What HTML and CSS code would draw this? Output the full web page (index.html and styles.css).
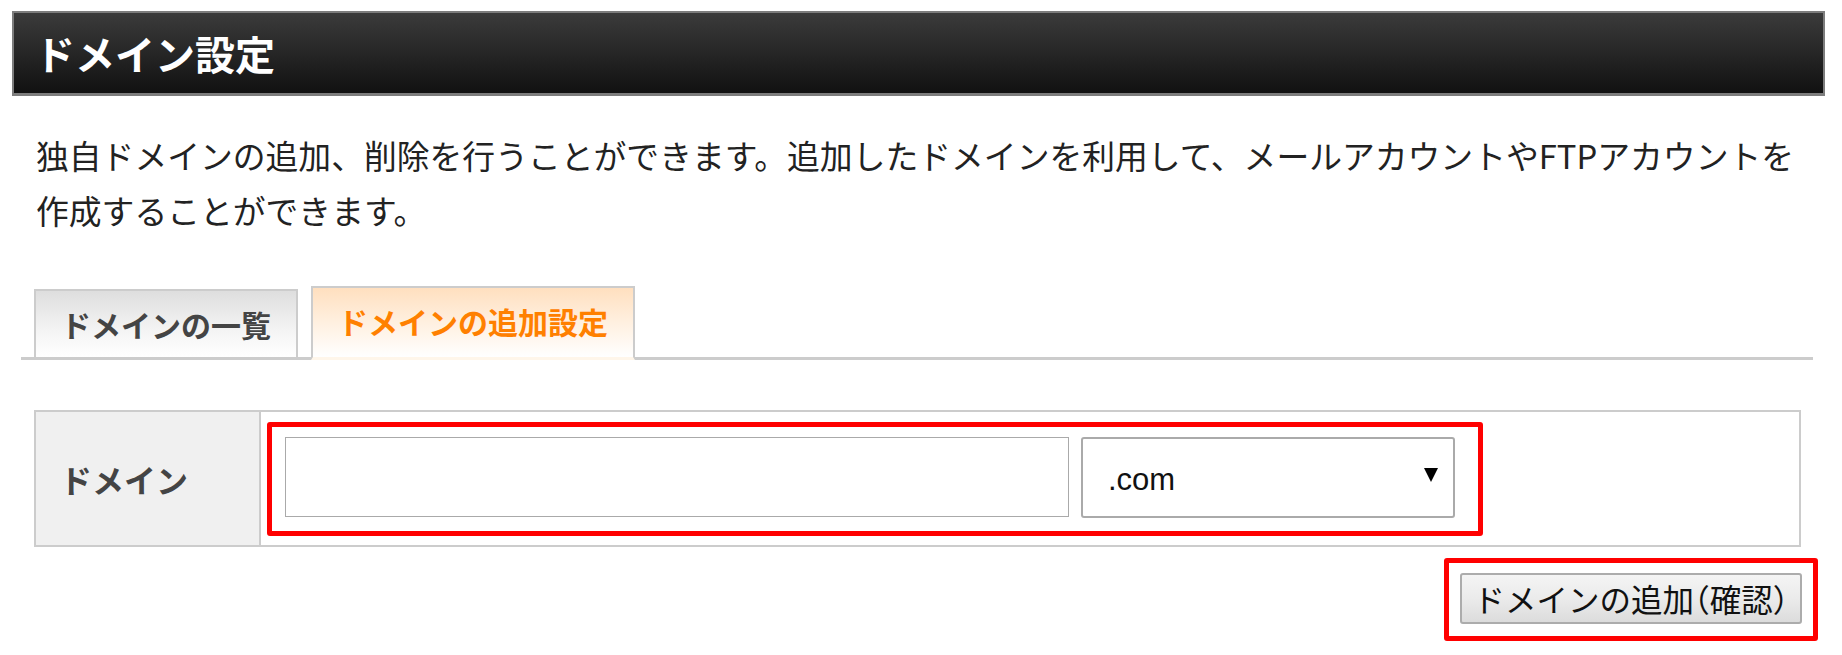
FILE: index.html
```html
<!DOCTYPE html>
<html lang="ja">
<head>
<meta charset="utf-8">
<title>ドメイン設定</title>
<link rel="stylesheet" href="styles.css">
</head>
<body>
<div class="page">
  <h1 class="page-title">ドメイン設定</h1>
  <p class="lead">独自ドメインの追加、削除を行うことができます。追加したドメインを利用して、メールアカウントやFTPアカウントを<br>作成することができます。</p>

  <div class="tabs">
    <div class="tab">ドメインの一覧</div>
    <div class="tab tab-active">ドメインの追加設定</div>
  </div>

  <div class="form-table">
    <div class="form-label">ドメイン</div>
    <div class="form-value">
      <div class="highlight highlight-fields">
        <div class="text-input"></div>
        <div class="select-box"><span class="select-text">.com</span><span class="select-arrow"></span></div>
      </div>
    </div>
  </div>

  <div class="actions">
    <div class="highlight highlight-button">
      <button class="btn" type="button">ドメインの追加<span class="paren">（</span>確認<span class="paren">）</span></button>
    </div>
  </div>
</div>
</body>
</html>
```

FILE: styles.css
```css
html, body {
  margin: 0;
  padding: 0;
  background: #ffffff;
}

body {
  font-family: "Noto Sans CJK JP", "Noto Sans", sans-serif;
  color: #222222;
}

.page {
  padding: 11px 17px 0 12px;
}

.page-title {
  margin: 0;
  height: 80px;
  line-height: 80px;
  padding-left: 21px;
  border: 2px solid #7d7d7d;
  border-bottom-width: 3px;
  background: linear-gradient(to bottom, #3b3b3b 0%, #262626 50%, #111111 100%);
  color: #ffffff;
  font-size: 40px;
  font-weight: 700;
}

.lead {
  margin: 31px 0 0 0;
  padding-left: 24px;
  font-size: 32.8px;
  line-height: 55px;
  color: #222222;
  font-weight: 400;
  white-space: nowrap;
}

.tabs {
  display: flex;
  align-items: flex-end;
  gap: 13px;
  margin: 49px 12px 0 9px;
  padding-left: 13px;
  border-bottom: 3px solid #cccccc;
  height: 71px;
}

.tab {
  box-sizing: border-box;
  height: 71px;
  margin-bottom: -3px;
  padding: 0 25px;
  border: 2px solid #cccccc;
  border-bottom: 3px solid #cccccc;
  background: linear-gradient(to bottom, #dedede 0%, #f4f4f4 60%, #ffffff 100%);
  color: #444444;
  font-size: 30px;
  font-weight: 700;
  line-height: 66px;
}

.tab-active {
  height: 74px;
  border-bottom: 3px solid #fff6ea;
  background: linear-gradient(to bottom, #ffdfbf 0%, #fff0e0 50%, #ffffff 100%);
  color: #ff8000;
}

.form-table {
  display: flex;
  margin: 50px 24px 0 22px;
  border: 2px solid #cccccc;
}

.form-label {
  box-sizing: border-box;
  width: 225px;
  flex: none;
  background: #f0f0f0;
  border-right: 2px solid #cccccc;
  display: flex;
  align-items: center;
  padding-left: 24px;
  color: #444444;
  font-size: 32px;
  font-weight: 700;
}

.form-value {
  flex: 1;
  padding: 10px 8px 9px 6px;
}

.highlight {
  border: 5px solid #ff0000;
  border-radius: 3px;
}

.highlight-fields {
  display: flex;
  gap: 12px;
  width: 1173px;
  padding: 10px 20px 13px 13px;
}

.text-input {
  box-sizing: border-box;
  width: 784px;
  height: 80px;
  border: 1px solid #aaaaaa;
  background: #ffffff;
}

.select-box {
  box-sizing: border-box;
  width: 374px;
  height: 81px;
  border: 2px solid #aaaaaa;
  border-radius: 3px;
  background: #ffffff;
  display: flex;
  align-items: center;
  justify-content: space-between;
  padding: 0 15px 0 25px;
  font-family: "Liberation Sans", Arial, sans-serif;
  color: #111111;
}

.select-text {
  font-size: 31px;
  line-height: 1;
  padding-top: 3px;
}

.select-arrow {
  width: 0;
  height: 0;
  border-left: 7.5px solid transparent;
  border-right: 7.5px solid transparent;
  border-top: 14px solid #000000;
  margin-top: -6px;
}

.actions {
  display: flex;
  justify-content: flex-end;
  margin: 11px 7px 0 0;
}

.highlight-button {
  padding: 10px 11px 12px 11px;
}

.btn {
  display: block;
  box-sizing: border-box;
  width: 342px;
  height: 51px;
  margin: 0;
  padding: 0;
  border: 2px solid #acacac;
  border-radius: 3px;
  background: linear-gradient(to bottom, #f4f4f4 0%, #ebebeb 50%, #dcdcdc 100%);
  font-family: "Noto Sans CJK JP", sans-serif;
  font-size: 31.5px;
  font-weight: 400;
  color: #111111;
  line-height: 47px;
  white-space: nowrap;
}

.paren {
  font-feature-settings: "halt" 1;
}
```
